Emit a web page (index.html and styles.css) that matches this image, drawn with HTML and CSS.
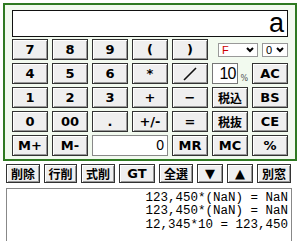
FILE: index.html
```html
<!DOCTYPE html>
<html lang="ja">
<head>
  <meta charset="UTF-8" />
  <title>電卓</title>
  <link rel="stylesheet" href="styles.css">
</head>
<body>
  <div class="calc">
    <div class="display">a</div>
    <div class="keys">
      <button>7</button>
      <button>8</button>
      <button>9</button>
      <button>(</button>
      <button>)</button>
      <div class="opts">
        <div class="sel sel-mode"><span class="red">F</span><svg width="8" height="6" viewBox="0 0 8 6"><path d="M1 1l3 3 3-3" fill="none" stroke="#000" stroke-width="2"/></svg></div>
        <div class="sel sel-digits"><span>0</span><svg width="8" height="6" viewBox="0 0 8 6"><path d="M1 1l3 3 3-3" fill="none" stroke="#000" stroke-width="2"/></svg></div>
      </div>

      <button>4</button>
      <button>5</button>
      <button>6</button>
      <button>*</button>
      <button aria-label="/"><svg width="14" height="14" viewBox="0 0 14 14"><path d="M1 13L13 1" stroke="#111" stroke-width="1.6"/></svg></button>
      <div class="rate"><span class="rate-box">10</span><span class="pct">%</span></div>
      <button>AC</button>

      <button>1</button>
      <button>2</button>
      <button>3</button>
      <button>+</button>
      <button>−</button>
      <button class="jp">税込</button>
      <button>BS</button>

      <button>0</button>
      <button>00</button>
      <button>.</button>
      <button>+/-</button>
      <button>=</button>
      <button class="jp">税抜</button>
      <button>CE</button>

      <button>M+</button>
      <button>M-</button>
      <div class="memory">0</div>
      <button>MR</button>
      <button>MC</button>
      <button>%</button>
    </div>
  </div>

  <div class="toolbar">
    <button class="jp w34">削除</button>
    <button class="jp w33">行削</button>
    <button class="jp w34">式削</button>
    <button class="w36">GT</button>
    <button class="jp w34">全選</button>
    <button class="w26">▼</button>
    <button class="w26">▲</button>
    <button class="jp w34">別窓</button>
  </div>

  <div class="log">
    <div>123,450*(NaN) = NaN</div>
    <div>123,450*(NaN) = NaN</div>
    <div>12,345*10 = 123,450</div>
  </div>
</body>
</html>
```

FILE: styles.css
```css
body {
  margin: 0;
  padding: 3px 3px 0;
  background: #fff;
  font-family: 'DejaVu Sans', 'Noto Sans CJK JP', sans-serif;
}

.calc {
  width: 276px;
  padding: 5px 7px 3px;
  border: 2px solid #2f7a22;
  background: #f2faef;
}

.display {
  height: 27px;
  box-sizing: border-box;
  border: 1px solid #111;
  background: #fff;
  text-align: right;
  padding-right: 3px;
  font-family: 'Liberation Sans', sans-serif;
  font-size: 27px;
  line-height: 24px;
  margin-bottom: 2px;
}

.keys {
  display: grid;
  grid-template-columns: repeat(7, 36px);
  grid-auto-rows: 21px;
  column-gap: 4px;
  row-gap: 3px;
}

button {
  padding: 0;
  margin: 0;
  font-family: 'DejaVu Sans', 'Noto Sans CJK JP', sans-serif;
  font-weight: bold;
  font-size: 13px;
  color: #000;
  background: #efefef;
  border: 1px solid #333;
  box-shadow: inset 1px 1px #fff, inset -1px -1px #999;
  line-height: 1;
}

button svg {
  display: block;
  margin: 0 auto;
}

.jp {
  font-family: 'Noto Sans CJK JP', sans-serif;
  font-size: 12px;
}

.opts {
  grid-column: span 2;
  display: flex;
  justify-content: flex-end;
  align-items: center;
  gap: 4px;
}

.sel {
  height: 14px;
  box-sizing: border-box;
  border: 1px solid #999;
  background: #fff;
  display: flex;
  align-items: center;
  justify-content: space-between;
  padding: 0 3px;
  font-family: 'Liberation Sans', sans-serif;
  font-size: 11px;
}

.sel-mode {
  width: 40px;
}

.sel-digits {
  width: 26px;
}

.red {
  color: #c00;
}

.rate {
  display: flex;
  align-items: flex-end;
  gap: 2px;
}

.rate-box {
  width: 27px;
  height: 21px;
  box-sizing: border-box;
  border: 1px solid #777;
  background: #fff;
  text-align: right;
  padding-right: 2px;
  font-family: 'Liberation Sans', sans-serif;
  font-size: 16px;
  line-height: 19px;
  letter-spacing: -1px;
}

.pct {
  font-size: 8px;
  color: #555;
  line-height: 8px;
  padding-bottom: 1px;
}

.memory {
  grid-column: span 2;
  box-sizing: border-box;
  border: 1px solid #888;
  background: #fff;
  text-align: right;
  padding-right: 3px;
  font-family: 'Liberation Sans', sans-serif;
  font-size: 14px;
  line-height: 19px;
}

.toolbar {
  display: flex;
  gap: 4px;
  margin: 3px 0 0 3px;
  height: 19px;
}

.toolbar button {
  height: 19px;
}

.w26 { width: 26px; }
.w33 { width: 33px; }
.w34 { width: 34px; }
.w36 { width: 36px; }

.log {
  margin: 5px 0 0 3px;
  width: 286px;
  height: 55px;
  box-sizing: border-box;
  border: 1px solid #888;
  border-bottom: none;
  background: #fff;
  text-align: right;
  padding: 3px 3px 0 0;
  font-family: 'Liberation Mono', monospace;
  font-size: 12.5px;
  line-height: 13.3px;
  color: #000;
}
```
